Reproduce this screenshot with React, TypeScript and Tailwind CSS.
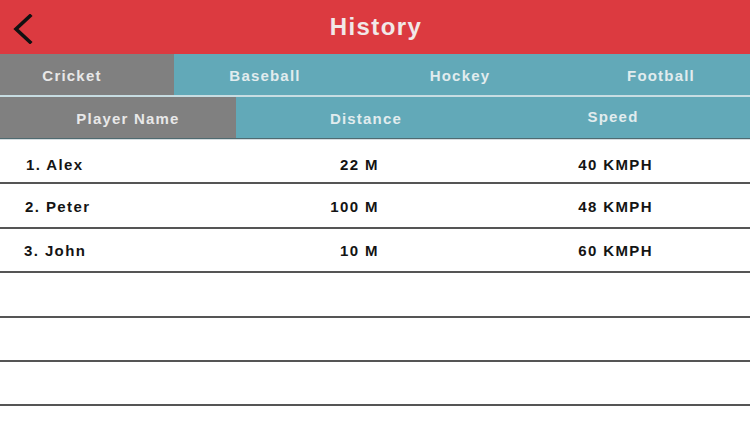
const tabs = [
  { label: "Cricket", active: true, cls: "w-[174px] pr-[30px]" },
  { label: "Baseball", active: false, cls: "w-[182px]" },
  { label: "Hockey", active: false, cls: "w-[208px]" },
  { label: "Football", active: false, cls: "flex-1 pl-[8px]" },
];

const rows = [
  { name: "1. Alex", distance: "22 M", speed: "40 KMPH", pl: "pl-[26px]" },
  { name: "2. Peter", distance: "100 M", speed: "48 KMPH", pl: "pl-[25px]" },
  { name: "3. John", distance: "10 M", speed: "60 KMPH", pl: "pl-[24px]" },
  null,
  null,
  null,
];

export default function App() {
  return (
    <div
      className="w-[750px] h-[423px] bg-white overflow-hidden"
      style={{ fontFamily: '"Liberation Sans", Arial, sans-serif' }}
    >
      {/* Header */}
      <div className="relative h-[54px] bg-[#dc3a40] flex items-center justify-center">
        <button className="absolute left-[10px] top-[13px] w-[26px] h-[32px] flex items-center justify-center">
          <svg width="22" height="30" viewBox="0 0 22 30" fill="none">
            <path d="M18 2 L4 15 L18 28" stroke="#111" strokeWidth="3.6" strokeLinecap="square" />
          </svg>
        </button>
        <h1 className="text-[24px] font-bold tracking-[1.4px] text-[#f1e8e8] pl-[2px]">History</h1>
      </div>

      {/* Sport tabs */}
      <div className="flex h-[43px] border-b-2 border-[#c7dde2]">
        {tabs.map((t) => (
          <div
            key={t.label}
            className={`${t.cls} flex items-center justify-center text-[15px] font-bold tracking-[1.2px] pt-[4px] ${
              t.active ? "bg-[#808080] text-[#e8e8e8]" : "bg-[#62a9b8] text-[#e1ecee]"
            }`}
          >
            {t.label}
          </div>
        ))}
      </div>

      {/* Column headers */}
      <div className="flex h-[42px] border-b border-[#4f6a70]">
        <div className="w-[236px] bg-[#808080] flex items-center justify-center pl-[20px] pt-[4px] text-[15px] font-bold tracking-[1.2px] text-[#e8e8e8]">
          Player Name
        </div>
        <div className="flex-1 bg-[#62a9b8] flex text-[15px] font-bold tracking-[1.2px] text-[#e1ecee]">
          <div className="w-[260px] flex items-center justify-center pt-[3px]">Distance</div>
          <div className="flex-1 flex items-center justify-center pr-[20px]">Speed</div>
        </div>
      </div>

      {/* Rows */}
      <div className="border-t border-[#d6dde0]">
        {rows.map((r, i) => (
          <div
            key={i}
            className={`h-[44.4px] border-b-2 border-[#555] flex items-center text-[15px] font-bold tracking-[1.4px] text-[#141414] ${
              i === 0 ? "pt-[9px]" : "pt-[3px]"
            }`}
          >
            {r && (
              <>
                <div className={`w-[200px] ${r.pl}`}>{r.name}</div>
                <div className="w-[179px] text-right">{r.distance}</div>
                <div className="w-[274px] text-right">{r.speed}</div>
              </>
            )}
          </div>
        ))}
      </div>
    </div>
  );
}
